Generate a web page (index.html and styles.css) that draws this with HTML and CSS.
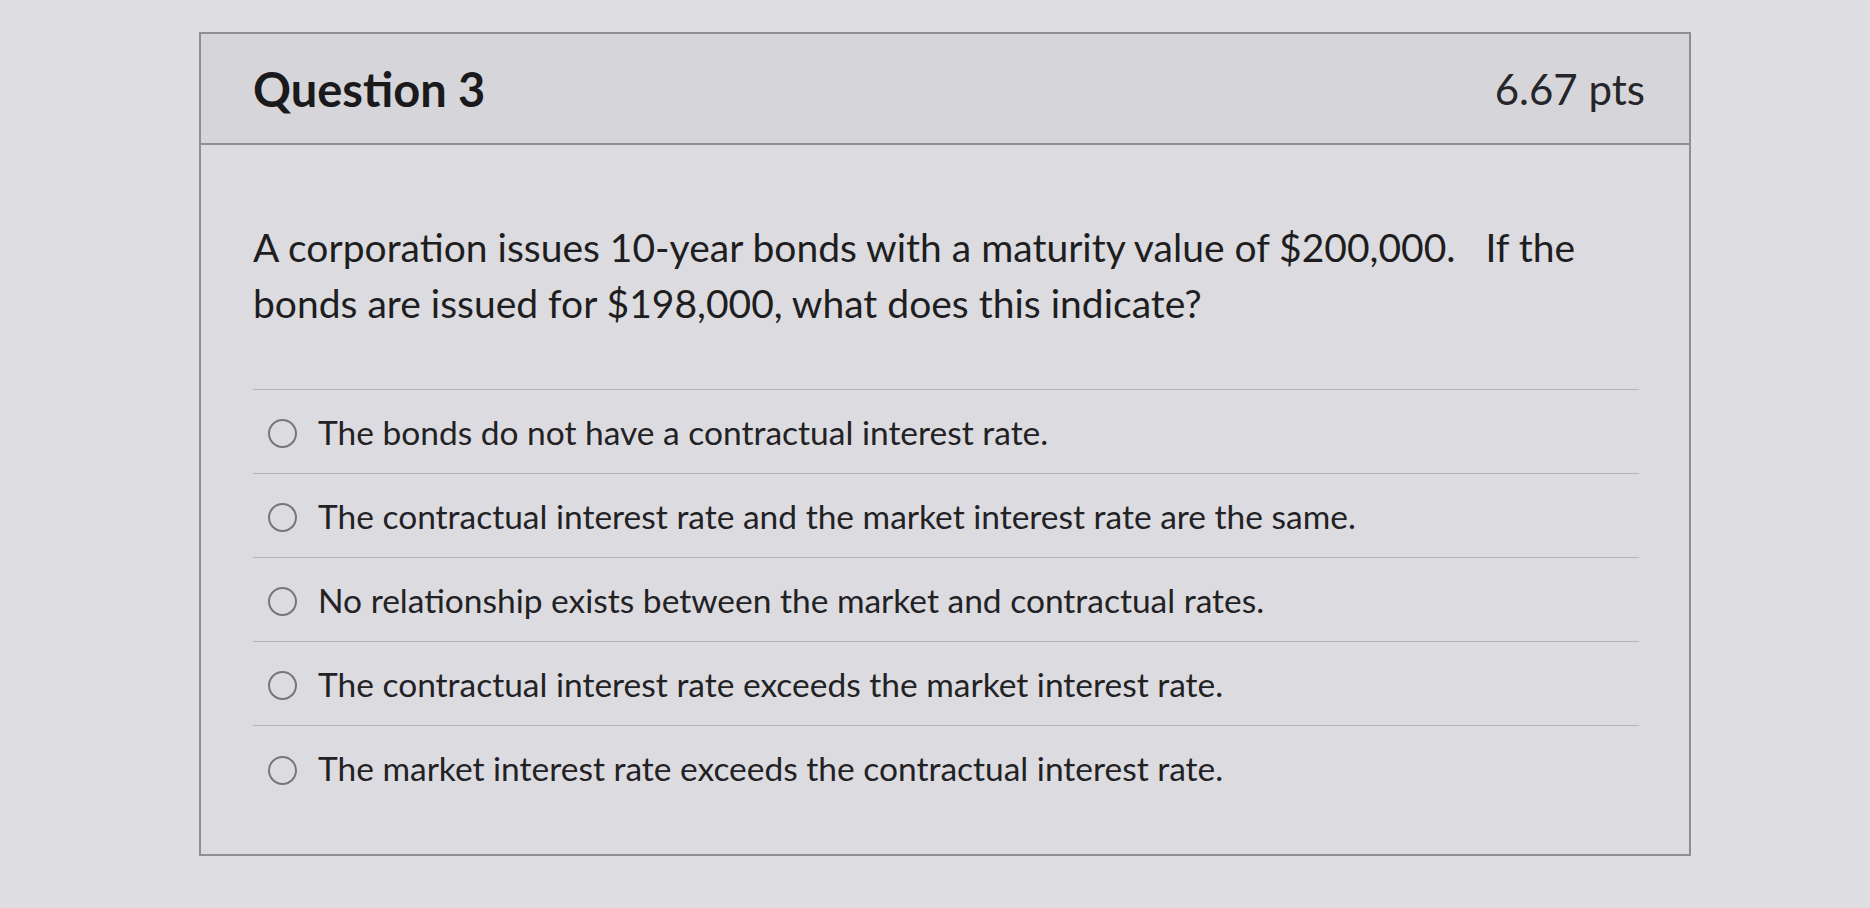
FILE: index.html
```html
<!DOCTYPE html>
<html lang="en">
<head>
<meta charset="utf-8">
<title>Question 3</title>
<link rel="stylesheet" href="styles.css">
</head>
<body>
<div class="card">
  <div class="header">
    <h2 class="title">Question 3</h2>
    <div class="points">6.67 pts</div>
  </div>
  <div class="content">
    <div class="question-text">A corporation issues 10-year bonds with a maturity value of $200,000.&nbsp;&nbsp; If the bonds are issued for $198,000, what does this indicate?</div>
    <div class="answers">
      <label class="answer"><span class="radio"></span><span class="label">The bonds do not have a contractual interest rate.</span></label>
      <label class="answer"><span class="radio"></span><span class="label">The contractual interest rate and the market interest rate are the same.</span></label>
      <label class="answer"><span class="radio"></span><span class="label">No relationship exists between the market and contractual rates.</span></label>
      <label class="answer"><span class="radio"></span><span class="label">The contractual interest rate exceeds the market interest rate.</span></label>
      <label class="answer"><span class="radio"></span><span class="label">The market interest rate exceeds the contractual interest rate.</span></label>
    </div>
  </div>
</div>
</body>
</html>
```
FILE: styles.css
```css
html, body {
  margin: 0;
  padding: 0;
}
body {
  background: #dfdee3;
  font-family: Lato, "Liberation Sans", sans-serif;
  color: #1e1e21;
  width: 1870px;
  height: 908px;
  overflow: hidden;
}
.card {
  margin: 32px 0 0 199px;
  width: 1492px;
  border: 2px solid #8f8e94;
  background: #dcdbe0;
  box-sizing: border-box;
}
.header {
  height: 111px;
  box-sizing: border-box;
  background: #d6d5da;
  border-bottom: 2px solid #8f8e94;
  display: flex;
  justify-content: space-between;
  align-items: center;
  padding: 0 44px 0 52px;
}
.title {
  margin: 0;
  font-size: 47px;
  font-weight: 700;
  color: #1a1a1d;
}
.points {
  font-size: 42px;
  font-weight: 400;
  color: #26262a;
}
.content {
  padding: 0 50px 44px 52px;
}
.question-text {
  font-size: 39px;
  line-height: 56px;
  padding: 74px 20px 58px 0;
  border-bottom: 1px solid #b5b4ba;
  color: #1e1e21;
}
.answers {
  display: flex;
  flex-direction: column;
}
.answer {
  height: 84px;
  box-sizing: border-box;
  display: flex;
  align-items: center;
  gap: 21px;
  padding-left: 15px;
  border-bottom: 1px solid #b5b4ba;
  font-size: 33.5px;
}
.answer:last-child {
  border-bottom: none;
}
.radio {
  width: 25px;
  height: 25px;
  border: 2px solid #77767b;
  border-radius: 50%;
  flex: none;
  margin-top: 4px;
}
.label {
  color: #222225;
}
```
